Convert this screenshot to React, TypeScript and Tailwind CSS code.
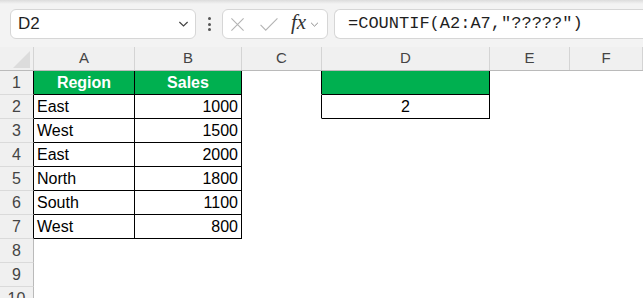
import React from "react";

const cols = [
  { key: "A", w: "w-[101px]" },
  { key: "B", w: "w-[107px]" },
  { key: "C", w: "w-[80px]" },
  { key: "D", w: "w-[168px]" },
  { key: "E", w: "w-[80px]" },
  { key: "F", w: "flex-1" },
];

type Cell = { text?: string; cls?: string };

const green = "bg-[#00b050] text-white font-bold text-[15px] justify-center border-r border-b border-black";

// sheet contents: row index -> column key -> cell
const data: Record<number, Record<string, Cell>> = {
  1: {
    A: { text: "Region", cls: green },
    B: { text: "Sales", cls: green },
    C: { cls: "border-r border-r-black border-b border-b-transparent" },
    D: { cls: "bg-[#00b050] border-r border-b border-black" },
  },
  2: {
    A: { text: "East" },
    B: { text: "1000" },
    C: { cls: "border-r border-r-black border-b border-b-transparent" },
    D: { text: "2", cls: "justify-center border-r border-b border-black" },
  },
  3: { A: { text: "West" }, B: { text: "1500" } },
  4: { A: { text: "East" }, B: { text: "2000" } },
  5: { A: { text: "North" }, B: { text: "1800" } },
  6: { A: { text: "South" }, B: { text: "1100" } },
  7: { A: { text: "West" }, B: { text: "800" } },
};

const rows = [1, 2, 3, 4, 5, 6, 7, 8, 9, 10];

const Chevron = ({ className }: { className?: string }) => (
  <svg viewBox="0 0 12 8" className={className} fill="none" stroke="currentColor" strokeWidth="1.3">
    <path d="M1.5 1.8 L6 6.2 L10.5 1.8" />
  </svg>
);

const TopBar = () => (
  <div className="relative h-[47px] bg-[#f3f3f3] flex items-start pt-[9px] pl-[10px]">
    <div className="absolute top-0 left-0 right-0 h-[4px] bg-gradient-to-b from-[#dcdcdc] to-[#f3f3f3]" />
    <div className="w-[186px] h-[30px] bg-white border border-[#d6d6d6] rounded-[6px] flex items-center pl-[7px] pr-[6px]">
      <span className="flex-1 text-[17px] text-[#1f1f1f]">D2</span>
      <Chevron className="w-[11px] h-[8px] text-[#444]" />
    </div>
    <div className="w-[26px] h-[30px] flex flex-col items-center justify-center gap-[2.5px]">
      <span className="w-[3px] h-[3px] bg-[#555] rounded-full" />
      <span className="w-[3px] h-[3px] bg-[#555] rounded-full" />
      <span className="w-[3px] h-[3px] bg-[#555] rounded-full" />
    </div>
    <div className="w-[106px] h-[30px] bg-white border border-[#d6d6d6] rounded-[6px] flex items-center pl-[7px]">
      <svg viewBox="0 0 16 16" className="w-[15px] h-[15px] text-[#b4b4b4]" fill="none" stroke="currentColor" strokeWidth="1.2">
        <path d="M1.5 1.5 L14.5 14.5 M14.5 1.5 L1.5 14.5" />
      </svg>
      <svg viewBox="0 0 20 16" className="ml-[14px] w-[20px] h-[15px] text-[#b4b4b4]" fill="none" stroke="currentColor" strokeWidth="1.2">
        <path d="M1 8.5 L6.5 14 L19 1.5" />
      </svg>
      <span className="ml-[12px] text-[21px] leading-none italic text-[#333] font-['Liberation_Serif',serif] -mt-[3px]">fx</span>
      <Chevron className="ml-[4px] w-[9px] h-[7px] text-[#888]" />
    </div>
    <div className="ml-[6px] flex-1 h-[30px] bg-white border border-r-0 border-[#d6d6d6] rounded-l-[6px] flex items-center pl-[13px]">
      <span className="text-[17px] text-[#1f1f1f] font-['Liberation_Mono',monospace]">=COUNTIF(A2:A7,"?????")</span>
    </div>
  </div>
);

const HeaderRow = () => (
  <div className="flex h-[24px] bg-[#f0f0f0] border-b border-[#bababa] text-[15px] text-[#444]">
    <div className="relative w-[34px] border-r border-[#d4d4d4]">
      <svg viewBox="0 0 20 20" className="absolute right-[3px] bottom-[2px] w-[17px] h-[17px]">
        <path d="M20 0 L20 20 L0 20 Z" fill="#dcdcdc" />
      </svg>
    </div>
    {cols.map((c) => (
      <div key={c.key} className={`${c.w} flex items-center justify-center border-r border-[#d4d4d4]`}>
        {c.key}
      </div>
    ))}
  </div>
);

const cellClass = (r: number, key: string, cell?: Cell) => {
  if (cell?.cls) return cell.cls;
  if (r <= 7 && key === "A") return "border-r border-b border-black pl-[3px]";
  if (r <= 7 && key === "B") return "border-r border-b border-black justify-end pr-[3px]";
  return "border-r border-b border-transparent";
};

const App = () => {
  return (
    <div className="w-[643px] h-[298px] overflow-hidden bg-white font-['Liberation_Sans',Arial,sans-serif]">
      <TopBar />
      <HeaderRow />
      {rows.map((r) => (
        <div key={r} className="flex h-[24px]">
          <div
            className={`w-[34px] bg-[#f0f0f0] flex items-center justify-center text-[16px] text-[#444] border-b border-b-[#dadada] border-r ${
              r <= 7 ? "border-r-black" : "border-r-[#bababa]"
            }`}
          >
            {r}
          </div>
          {cols.map((c) => {
            const cell = data[r]?.[c.key];
            return (
              <div key={c.key} className={`${c.w} flex items-center text-[16px] text-black ${cellClass(r, c.key, cell)}`}>
                {cell?.text}
              </div>
            );
          })}
        </div>
      ))}
    </div>
  );
};

export default App;
